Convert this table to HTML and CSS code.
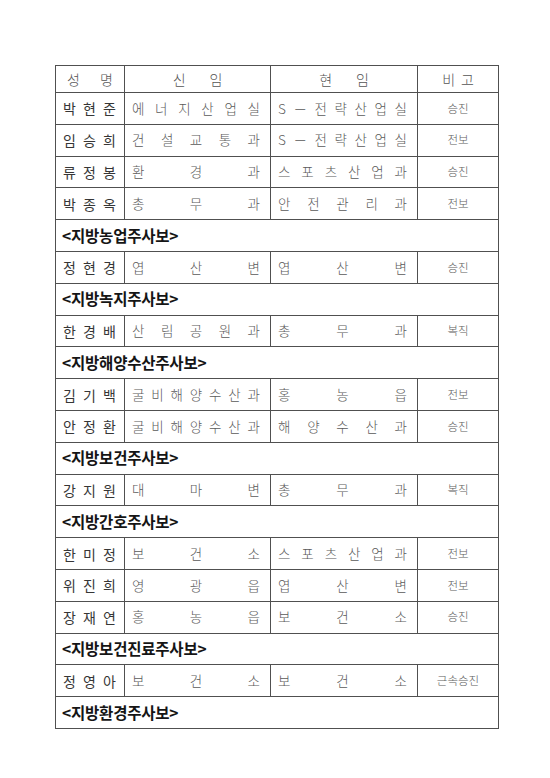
FILE: index.html
```html
<!DOCTYPE html>
<html lang="ko">
<head>
<meta charset="utf-8">
<link rel="stylesheet" href="styles.css">
</head>
<body>
<table class="roster">
  <colgroup>
    <col class="c-name"><col class="c-new"><col class="c-cur"><col class="c-note">
  </colgroup>
  <tr class="head">
    <td class="hname">성 명</td>
    <td class="hmid">신 임</td>
    <td class="hmid">현 임</td>
    <td class="hnote">비 고</td>
  </tr>
  <tr><td class="name">박 현 준</td><td class="j">에 너 지 산 업 실</td><td class="j">S － 전 략 산 업 실</td><td class="note">승진</td></tr>
  <tr><td class="name">임 승 희</td><td class="j">건 설 교 통 과</td><td class="j">S － 전 략 산 업 실</td><td class="note">전보</td></tr>
  <tr><td class="name">류 정 봉</td><td class="j">환 경 과</td><td class="j">스 포 츠 산 업 과</td><td class="note">승진</td></tr>
  <tr><td class="name">박 종 옥</td><td class="j">총 무 과</td><td class="j">안 전 관 리 과</td><td class="note">전보</td></tr>
  <tr><td class="sec" colspan="4">&lt;지방농업주사보&gt;</td></tr>
  <tr><td class="name">정 현 경</td><td class="j">엽 산 변</td><td class="j">엽 산 변</td><td class="note">승진</td></tr>
  <tr><td class="sec" colspan="4">&lt;지방녹지주사보&gt;</td></tr>
  <tr><td class="name">한 경 배</td><td class="j">산 림 공 원 과</td><td class="j">총 무 과</td><td class="note">복직</td></tr>
  <tr><td class="sec" colspan="4">&lt;지방해양수산주사보&gt;</td></tr>
  <tr><td class="name">김 기 백</td><td class="j">굴 비 해 양 수 산 과</td><td class="j">홍 농 읍</td><td class="note">전보</td></tr>
  <tr><td class="name">안 정 환</td><td class="j">굴 비 해 양 수 산 과</td><td class="j">해 양 수 산 과</td><td class="note">승진</td></tr>
  <tr><td class="sec" colspan="4">&lt;지방보건주사보&gt;</td></tr>
  <tr><td class="name">강 지 원</td><td class="j">대 마 변</td><td class="j">총 무 과</td><td class="note">복직</td></tr>
  <tr><td class="sec" colspan="4">&lt;지방간호주사보&gt;</td></tr>
  <tr><td class="name">한 미 정</td><td class="j">보 건 소</td><td class="j">스 포 츠 산 업 과</td><td class="note">전보</td></tr>
  <tr><td class="name">위 진 희</td><td class="j">영 광 읍</td><td class="j">엽 산 변</td><td class="note">전보</td></tr>
  <tr><td class="name">장 재 연</td><td class="j">홍 농 읍</td><td class="j">보 건 소</td><td class="note">승진</td></tr>
  <tr><td class="sec" colspan="4">&lt;지방보건진료주사보&gt;</td></tr>
  <tr><td class="name">정 영 아</td><td class="j">보 건 소</td><td class="j">보 건 소</td><td class="note">근속승진</td></tr>
  <tr><td class="sec" colspan="4">&lt;지방환경주사보&gt;</td></tr>
</table>
</body>
</html>
```
FILE: styles.css
```css
html, body {
  margin: 0;
  padding: 0;
  background: #ffffff;
}
body {
  font-family: "Noto Sans CJK KR", "Noto Sans", sans-serif;
}
.roster {
  margin: 65px 0 0 55px;
  border-collapse: collapse;
  table-layout: fixed;
  width: 443px;
}
.c-name { width: 69px; }
.c-new { width: 146px; }
.c-cur { width: 147px; }
.c-note { width: 81px; }
.roster td {
  border: 1px solid #505050;
  padding: 0;
  height: 30.8px;
  vertical-align: middle;
  line-height: 1;
}
.roster tr.head td {
  height: 26px;
  color: #555;
  font-size: 14px;
  font-weight: 300;
}
.hname {
  text-align: justify;
  text-align-last: justify;
  padding: 0 11px 0 11px !important;
}
.hmid {
  text-align: center;
  word-spacing: 20px;
}
.hnote {
  text-align: center;
  word-spacing: 2px;
}
.name {
  text-align: justify;
  text-align-last: justify;
  padding: 0 8px 0 7px !important;
  font-size: 14px;
  color: #363636;
}
.j {
  text-align: justify;
  text-align-last: justify;
  padding: 0 10px 0 7px !important;
  font-size: 13.5px;
  font-weight: 300;
  color: #5a5a5a;
}
.note {
  text-align: center;
  font-size: 11.5px;
  font-weight: 300;
  color: #5e5e5e;
}
.sec {
  padding: 0 0 0 6px !important;
  font-size: 15.5px;
  font-weight: 700;
  color: #151515;
  letter-spacing: -0.2px;
}
```
